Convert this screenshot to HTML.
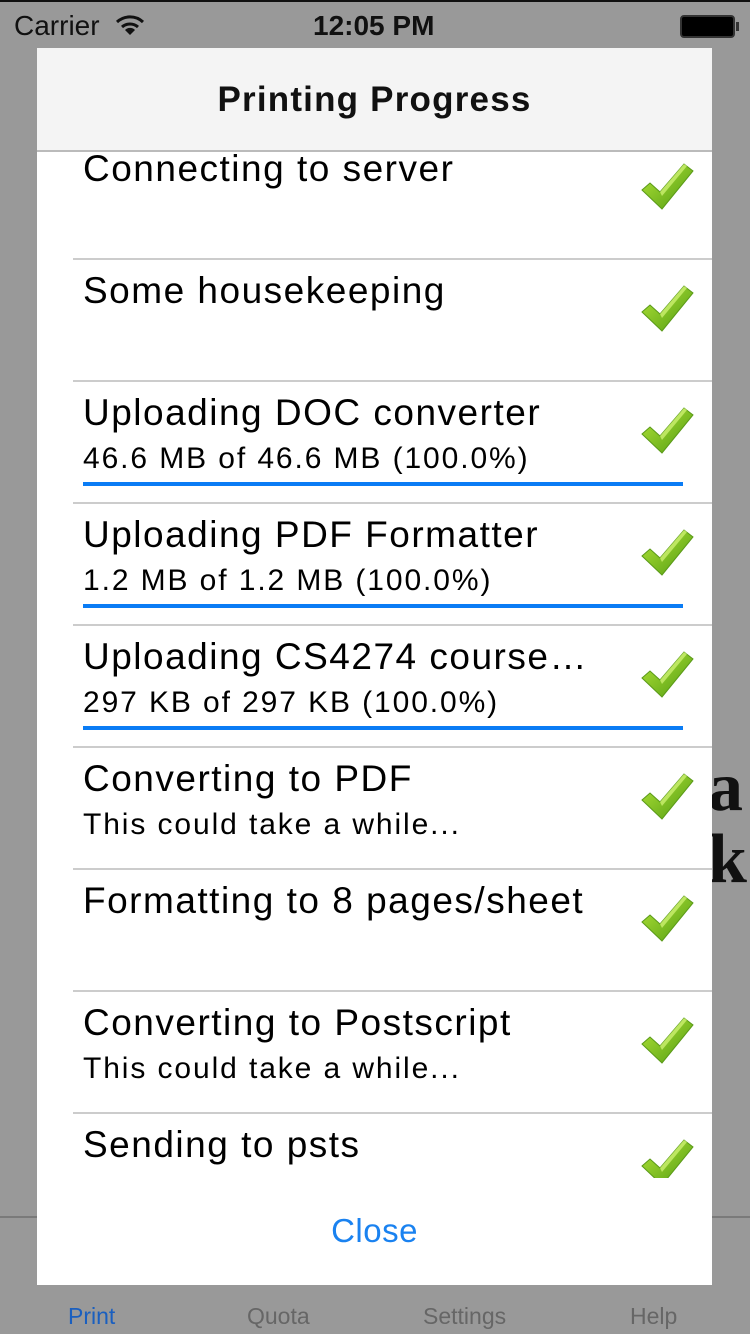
<!DOCTYPE html>
<html><head><meta charset="utf-8"><style>
*{margin:0;padding:0;box-sizing:border-box}
body{width:750px;height:1334px;background:#999;position:relative;overflow:hidden;font-family:"Liberation Sans",sans-serif}
.sb{position:absolute;top:0;left:0;width:750px;height:48px;border-top:2px solid #111}
.t{position:absolute;white-space:nowrap}
.dlg{position:absolute;left:37px;top:48px;width:675px;height:1237px;background:#fff;overflow:hidden}
.hdr{position:absolute;left:0;top:0;width:675px;height:104px;background:#f4f4f4;border-bottom:2px solid #bbb;z-index:2;text-align:center;font-weight:bold;font-size:35px;letter-spacing:1.2px;line-height:104px;color:#111}
.list{position:absolute;left:0;top:0;width:675px;height:1130px;overflow:hidden}
.row{position:absolute;left:0;width:675px;height:122px}
.row .sep{position:absolute;left:36px;right:0;bottom:0;height:2px;background:#ccc}
.row .ti{position:absolute;left:46px;top:10px;font-size:37px;letter-spacing:1.5px;color:#000;white-space:nowrap;max-width:530px;overflow:hidden}
.row .su{position:absolute;left:46px;top:60px;font-size:30px;letter-spacing:1.9px;color:#000;white-space:nowrap}
.row .bar{position:absolute;left:46px;width:600px;top:100px;height:4px;background:#0a7cf5}
.row svg{position:absolute;left:600px;top:20px}
.close{position:absolute;left:0;width:675px;top:1164px;text-align:center;font-size:33px;letter-spacing:0.5px;color:#1a82f0}
.tab{position:absolute;top:1303px;font-size:23px;color:#666}
</style></head><body>
<div class="sb">
<div class="t" style="left:14px;top:8px;font-size:28px;color:#111">Carrier</div>
<svg style="position:absolute;left:115px;top:12px" width="30" height="22" viewBox="0 0 30 22"><path d="M2 8 A19 19 0 0 1 28 8" stroke="#111" stroke-width="3" fill="none"/><path d="M7 13 A12 12 0 0 1 23 13" stroke="#111" stroke-width="3" fill="none"/><path d="M15 21 L10 16 A7 7 0 0 1 20 16 Z" fill="#111"/></svg>
<div class="t" style="left:313px;top:8px;font-size:28px;font-weight:bold;color:#111">12:05 PM</div>
<div style="position:absolute;left:680px;top:13px;width:55px;height:23px;border:2px solid #333;border-radius:4px;background:#000"></div>
<div style="position:absolute;left:736px;top:20px;width:3px;height:9px;background:#333"></div>
</div>
<div style="position:absolute;left:0;top:1216px;width:750px;height:2px;background:#7a7a7a"></div>
<div class="tab" style="left:68px;color:#1a5fbf">Print</div>
<div class="tab" style="left:247px">Quota</div>
<div class="tab" style="left:423px">Settings</div>
<div class="tab" style="left:630px">Help</div>
<div class="t" style="left:708px;top:748px;font-family:'Liberation Serif',serif;font-weight:bold;font-size:70px;color:#111">a</div>
<div class="t" style="left:708px;top:820px;font-family:'Liberation Serif',serif;font-weight:bold;font-size:70px;color:#111">k</div>
<div class="dlg">
<div class="hdr">Printing Progress</div>
<div class="list">
<svg width="0" height="0" style="position:absolute"><defs><linearGradient id="g" x1="0" y1="0" x2="1" y2="1"><stop offset="0" stop-color="#b5e63a"/><stop offset="1" stop-color="#4f9a10"/></linearGradient></defs></svg>
ROWS
</div>
<div class="close">Close</div>
</div>
<script>
var rows=[["Connecting to server","",0],["Some housekeeping","",0],["Uploading DOC converter","46.6 MB of 46.6 MB (100.0%)",1],["Uploading PDF Formatter","1.2 MB of 1.2 MB (100.0%)",1],["Uploading CS4274 course…","297 KB of 297 KB (100.0%)",1],["Converting to PDF","This could take a while...",0],["Formatting to 8 pages/sheet","",0],["Converting to Postscript","This could take a while...",0],["Sending to psts","",0]];
var h="";
rows.forEach(function(r,i){
h+='<div class="row" style="top:'+(90+122*i)+'px"><div class="ti">'+r[0]+'</div>'+(r[1]?'<div class="su">'+r[1]+'</div>':'')+(r[2]?'<div class="bar"></div>':'')+'<svg width="60" height="60" viewBox="0 0 60 60"><path d="M5 32 L13 25 L23 34 L47 6 L56 13 L25 51 Z" fill="url(#g)" stroke="#5a9a18" stroke-width="1"/><path d="M23 34 L47 6 L50 8 L25 38 Z" fill="#d6f77a" opacity=".7"/></svg>'+(i<8?'<div class="sep"></div>':'')+'</div>';
});
document.querySelector('.list').innerHTML=document.querySelector('.list').innerHTML.replace('ROWS',h);
</script>
</body></html>
